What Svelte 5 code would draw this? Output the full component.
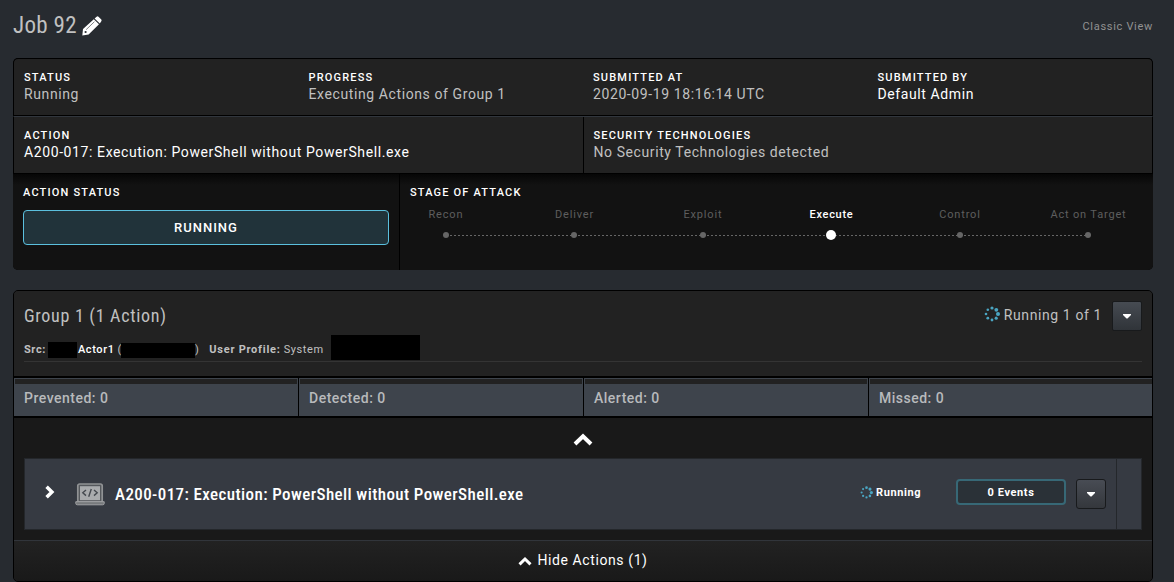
<script>
  const fields = [
    { label: 'STATUS', value: 'Running' },
    { label: 'PROGRESS', value: 'Executing Actions of Group 1' },
    { label: 'SUBMITTED AT', value: '2020-09-19 18:16:14 UTC' },
    { label: 'SUBMITTED BY', value: 'Default Admin', link: true }
  ];
  const stages = ['Recon', 'Deliver', 'Exploit', 'Execute', 'Control', 'Act on Target'];
  const active = 'Execute';
  const stats = ['Prevented: 0', 'Detected: 0', 'Alerted: 0', 'Missed: 0'];
  const dots = [
    [8, 2, 1.6], [12.3, 3.8, 1.9], [14, 8, 2], [12.2, 12.2, 1.6],
    [8, 14, 1.4], [3.8, 12.2, 1.4], [2, 8, 1.3], [3.8, 3.8, 1.3]
  ];
</script>

{#snippet spinner(size)}
  <svg class="spinner" width={size} height={size} viewBox="0 0 16 16">
    {#each dots as [cx, cy, r]}<circle {cx} {cy} {r} />{/each}
  </svg>
{/snippet}

{#snippet caret()}
  <svg width="8" height="5" viewBox="0 0 8 5"><path d="M0 0h8v1L4.5 4.5h-1L0 1z" fill="#fff" /></svg>
{/snippet}

<div class="page">
  <header class="top">
    <h1><span class="job">Job 92</span>
      <svg width="20" height="20" viewBox="0 0 20 20">
        <path fill="#fff" d="M0.3 19.5 1 13 11.8 3.300 17 8.300 6.600 18.500ZM12.600 2.600 14.600.7Q15.600 0 16.500.8L19.300 3.500Q20 4.300 19.300 5.200L17.800 7.600Z" />
        <path fill="none" stroke="#272b30" stroke-width=".6" d="M4.200 13.600 12.400 5.700" />
        <circle cx="3.600" cy="16" r="1.100" fill="#272b30" />
      </svg>
    </h1>
    <span class="classic">Classic View</span>
  </header>

  <section class="summary">
    <div class="four">
      {#each fields as f}
        <div class="field"><div class="label">{f.label}</div><div class="value" class:link={f.link}>{f.value}</div></div>
      {/each}
    </div>
    <div class="two">
      <div class="field"><div class="label">ACTION</div><div class="value link">A200-017: Execution: PowerShell without PowerShell.exe</div></div>
      <div class="field sec"><div class="label">SECURITY TECHNOLOGIES</div><div class="value">No Security Technologies detected</div></div>
    </div>
    <div class="status">
      <div class="astat"><div class="label">ACTION STATUS</div><div class="running">RUNNING</div></div>
      <div class="attack">
        <div class="label">STAGE OF ATTACK</div>
        <div class="stages">
          {#each stages as s}
            <div class="stage" class:on={s === active}><span class="name">{s}</span><span class="track"><i></i></span></div>
          {/each}
        </div>
      </div>
    </div>
  </section>

  <section class="group">
    <div class="ghead">
      <div class="gtitle">
        <h2><span>Group 1 (1 Action)</span></h2>
        <div class="gstate">{@render spinner(16)}<span>Running 1 of 1</span><button>{@render caret()}</button></div>
      </div>
      <div class="src">
        <b>Src:</b><i class="box b1"></i><b class="actor">Actor1</b><span class="paren">(</span><i class="box b2"></i><span>)</span>
        <b class="prof">User Profile:</b><span class="sys">System</span><i class="box b3"></i>
      </div>
    </div>
    <div class="stats">
      {#each stats as s}<div class="stat"><span>{s}</span></div>{/each}
    </div>
    <div class="body">
      <svg class="up" width="20" height="13" viewBox="0 0 20 13"><path d="M2 11 10 3.2 18 11" fill="none" stroke="#fff" stroke-width="4" /></svg>
      <div class="row">
        <svg class="chev" width="10" height="14" viewBox="0 0 10 14"><path d="M1.6 1.8 6.9 7 1.6 12.2" fill="none" stroke="#fff" stroke-width="3.5" /></svg>
        <svg class="laptop" width="30" height="23" viewBox="0 0 30 23">
          <rect x="2.8" y="1" width="24.4" height="18" rx="1.8" fill="#55585c" stroke="#909294" stroke-width="1.7" />
          <rect x="5" y="3.2" width="20" height="14" fill="#a9abad" />
          <path d="M11 7 7.8 9.8 11 12.6M19 7l3.2 2.8L19 12.6M16.3 6l-2.6 7.8" fill="none" stroke="#45494f" stroke-width="1.4" />
          <path d="M.8 18.7h28.4v1.8q0 1.3-1.6 1.3H2.4Q.8 21.8.8 20.5Z" fill="#77797c" stroke="#a0a2a4" />
        </svg>
        <div class="rtitle"><span>A200-017: Execution: PowerShell without PowerShell.exe</span></div>
        <div class="rstate">{@render spinner(13)}<span>Running</span></div>
        <div class="events">0 Events</div>
        <button>{@render caret()}</button>
        <div class="tail"></div>
      </div>
    </div>
    <div class="foot">
      <svg width="14" height="10" viewBox="0 0 14 10"><path d="M1.5 8.3 7 3l5.500 5.300" fill="none" stroke="#fff" stroke-width="3" /></svg>
      <span>Hide Actions (1)</span>
    </div>
  </section>
</div>

<style>
  :global(body) { background: #272b30; overflow: hidden; }
  .page { box-sizing: border-box; height: 582px; padding: 0 21px 0 13px; font-family: Roboto, sans-serif; color: #c0c0c0; overflow: hidden; }
  .page :global(*) { box-sizing: border-box; }
  svg { display: block; flex: none; }
  i { display: block; flex: none; }
  .top { height: 58px; display: flex; justify-content: space-between; align-items: flex-start; }
  h1, h2 { margin: 0; font-weight: 400; font-family: 'Roboto Condensed', Roboto, sans-serif; font-stretch: 75%; }
  h1 { display: flex; gap: 5px; align-items: center; font-size: 23px; line-height: 30px; letter-spacing: 0.3px; padding-top: 11px; }
  .job { white-space: nowrap; }
  .classic { font-size: 11px; line-height: 14px; letter-spacing: 0.7px; color: #929292; padding-top: 20px; }

  .summary { height: 212px; border-radius: 5px; overflow: hidden; background: #000; }
  .four { display: grid; grid-template-columns: repeat(4, 284.5px); height: 57px; background: #222; border: 1px solid #000; border-bottom: 0; border-radius: 5px 5px 0 0; }
  .field { padding: 11px 0 0 10px; white-space: nowrap; }
  .label { font-size: 11px; font-weight: 500; line-height: 16px; letter-spacing: 1.18px; color: #fff; }
  .value { font-size: 14px; line-height: 17px; letter-spacing: 0.6px; }
  .link { color: #fff; }
  .two { display: grid; grid-template-columns: 569px 1fr; margin-top: 1px; height: 57px; border: 1px solid #000; border-top-color: #31363d; border-bottom: 0; background: #222; }
  .sec { border-left: 1px solid #000; }
  .two .sec { padding-left: 9.4px; }
  .status { display: grid; grid-template-columns: 387px 1fr; margin-top: 1px; height: 96px; background: linear-gradient(#060606, #121212 11px); }
  .astat { padding: 11px 10px 0 10px; border-right: 1px solid #000; }
  .running { margin-top: 9px; height: 35px; border: 1px solid #5bc0de; border-radius: 4px; background: #21333a; color: #fff; text-align: center; font-size: 13px; font-weight: 500; line-height: 33px; letter-spacing: 1px; }
  .attack { padding: 11px 0 0 10px; }
  .stages { display: grid; grid-template-columns: repeat(6, 128.5px); margin: 6px 0 0 -28.3px; }
  .stage { display: flex; flex-direction: column; align-items: center; color: #5e5e5e; font-size: 11px; line-height: 16px; letter-spacing: 0.83px; white-space: nowrap; }
  .track { display: flex; align-items: center; justify-content: center; width: 100%; height: 12px; margin-top: 6px; background: repeating-linear-gradient(90deg, #666 0 2px, transparent 2px 4px) 0 6px / 100% 1px no-repeat; }
  .stage:first-child .track { background-position: 64px 6px; }
  .stage:last-child .track { background-size: 50% 1px; }
  .track i { width: 6px; height: 6px; border-radius: 50%; background: #666; }
  .on { color: #fff; font-weight: 500; letter-spacing: 0.7px; }
  .on .track i { width: 10px; height: 10px; background: #fff; }

  .group { margin-top: 20px; height: 292px; border: 1px solid #000; border-radius: 5px; background: #191919; overflow: hidden; }
  .ghead { height: 85px; background: #222; padding: 0 10px; }
  .gtitle { display: flex; justify-content: space-between; height: 45px; }
  h2 { font-size: 18px; line-height: 24px; padding-top: 13px; letter-spacing: 0.7px; white-space: nowrap; }
  .gstate { display: flex; align-items: center; height: 30px; margin-top: 10px; font-size: 14px; letter-spacing: 0.6px; }
  .gstate span { margin: -2px 10px 0 4px; }
  .gstate :global(.spinner) { margin-top: -4px; }
  .spinner { fill: #4aa5c2; }
  button { display: flex; align-items: center; justify-content: center; width: 30px; height: 30px; padding: 0; border: 1px solid #181a1c; border-radius: 2px; background: linear-gradient(#464b52, #303439); flex: none; }
  .src { display: flex; align-items: center; height: 26px; padding-top: 2px; border-bottom: 1px solid #343434; font-size: 11px; letter-spacing: 0.6px; white-space: nowrap; }
  .src b { font-weight: 700; }
  .src .actor { color: #fff; font-weight: 500; margin-right: 3px; }
  .box { background: #000; }
  .b1 { width: 29px; height: 16px; margin: 1px 1px 0 2px; }
  .b2 { width: 74px; height: 15px; margin-top: 2px; }
  .paren { margin-right: -1px; }
  .src .prof { margin: 0 3px 0 10px; letter-spacing: 0.75px; }
  .b3 { width: 89px; height: 25px; margin: -5px 0 0 7px; }
  .stats { display: grid; grid-template-columns: repeat(4, 1fr); gap: 1px; height: 42px; margin-right: -1px; padding: 2px 0; background: #000; }
  .stat { height: 38px; border: 1px solid #3e444c; background: linear-gradient(#222 5px, #3e444c 5px); padding: 10px 9px 0; font-size: 14px; font-weight: 500; line-height: 18px; letter-spacing: 0.5px; color: #b8babc; }
  .body { height: 122px; background: #191919; padding: 15px 10px 0; }
  .up { margin: 0 auto 12px; }
  .row { display: flex; align-items: flex-start; height: 72px; border: 1px solid #24272b; background: #363a42; }
  .chev { margin: 26px 0 0 20px; }
  .laptop { margin: 24px 0 0 20px; }
  .rtitle { width: 755px; padding: 23px 0 0 10px; font-family: 'Roboto Condensed', Roboto, sans-serif; font-stretch: 75%; font-weight: 500; font-size: 17px; line-height: 24px; letter-spacing: 0.4px; color: #fff; white-space: nowrap; flex: none; }
  .rstate { display: flex; gap: 3px; align-items: center; width: 96px; height: 16px; margin-top: 25px; color: #fff; font-size: 11px; font-weight: 700; letter-spacing: 0.6px; flex: none; }
  .events { width: 110px; height: 26px; margin: 20px 10px 0 0; border: 2px solid #376876; border-radius: 4px; background: #2a3137; color: #fff; font-size: 11px; font-weight: 700; line-height: 23px; letter-spacing: 0.6px; text-align: center; flex: none; }
  .row button { margin-top: 20px; border-radius: 3px; background: linear-gradient(#484c54, #34373c); }
  .tail { flex: 1; height: 70px; margin-left: 10px; border-left: 1px solid #24272b; }
  .foot { display: flex; justify-content: center; gap: 5px; height: 41px; border-top: 1px solid #31353b; background: linear-gradient(#222, #191919); color: #fff; font-size: 14px; line-height: 18px; letter-spacing: 0.6px; padding-top: 10px; }
  .foot svg { margin-top: 5px; }
</style>
